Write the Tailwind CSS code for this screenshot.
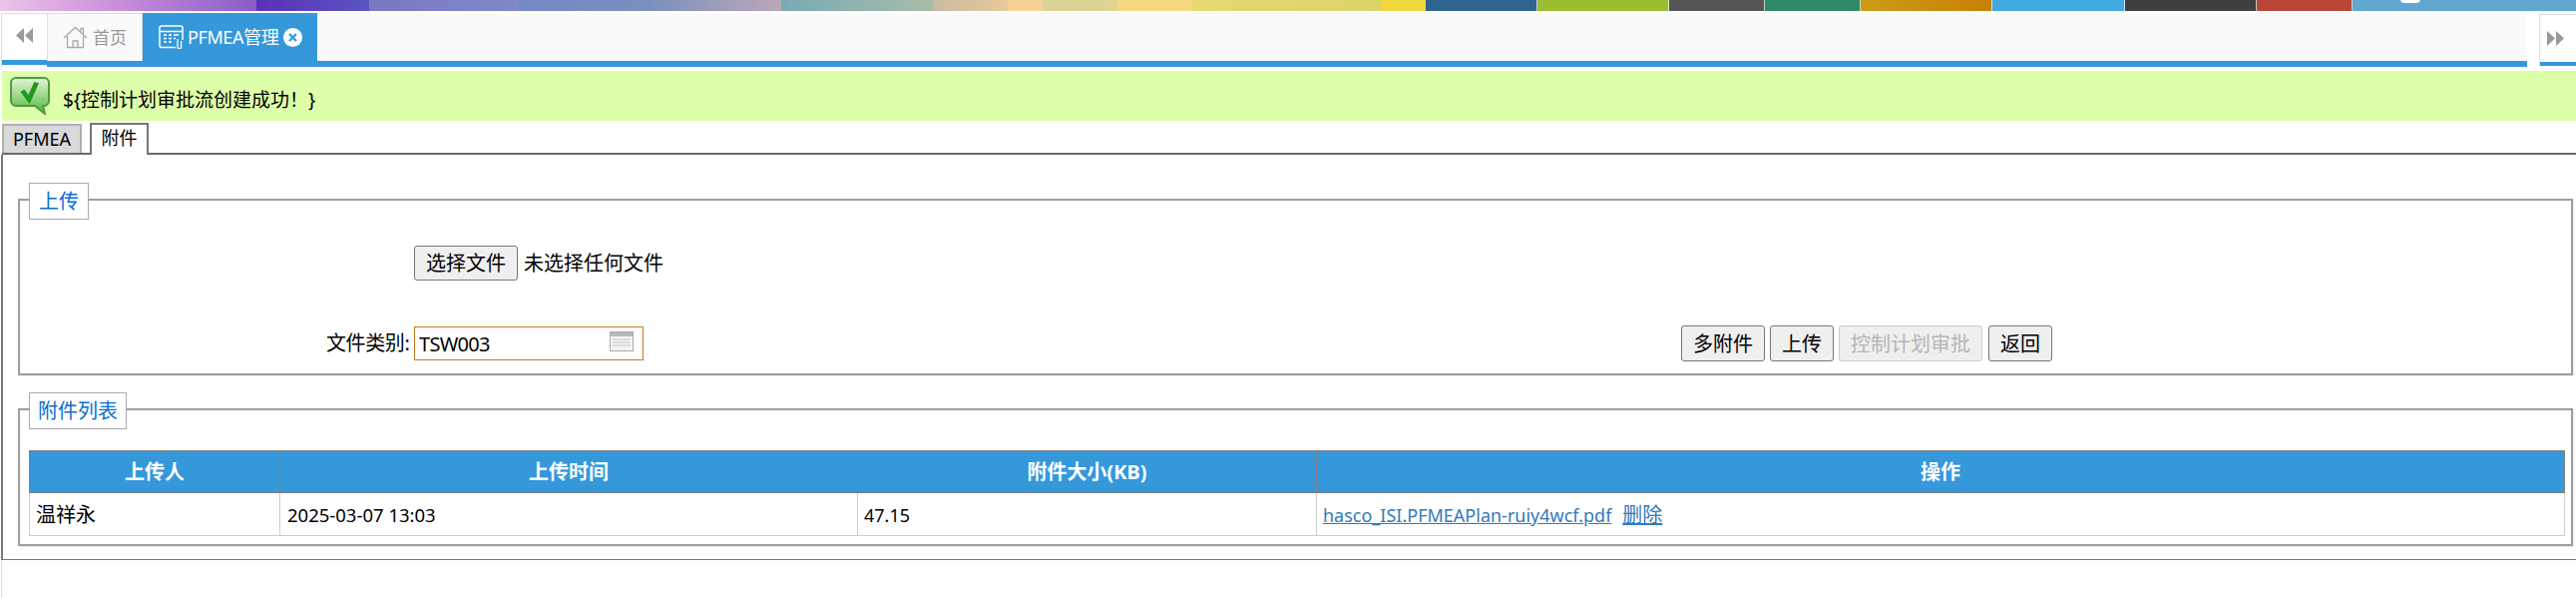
<!DOCTYPE html>
<html lang="zh-CN">
<head>
<meta charset="UTF-8">
<script src="https://cdn.jsdelivr.net/npm/@tailwindcss/browser@4"></script>
<title>PFMEA管理</title>
</head>
<body class="bg-white overflow-hidden font-['Noto_Sans','Noto_Sans_CJK_SC',sans-serif] text-black">
<div class="w-[2582px] h-[599px] flex flex-col overflow-hidden">

  <!-- colour strip -->
  <div class="flex h-[11px] shrink-0 relative">
    <div class="w-[257px] bg-linear-to-r from-[#ecc4e8] via-[#c58ad8] to-[#8a5cc8]"></div>
    <div class="w-[113px] bg-linear-to-r from-[#5830b8] to-[#5a54c2]"></div>
    <div class="w-[150px] bg-linear-to-r from-[#7a78c4] to-[#8088c8]"></div>
    <div class="w-[263px] bg-linear-to-r from-[#7488c8] via-[#7a90bc] to-[#bba8b8]"></div>
    <div class="w-[152px] bg-linear-to-r from-[#78aab4] to-[#a8bca8]"></div>
    <div class="w-[75px] bg-linear-to-r from-[#c8bca0] to-[#e8c898]"></div>
    <div class="w-[35px] bg-[#f8d098]"></div>
    <div class="w-[75px] bg-linear-to-r from-[#d8d498] to-[#e0d490]"></div>
    <div class="w-[75px] bg-[#f6d880]"></div>
    <div class="w-[190px] bg-linear-to-r from-[#e8d870] to-[#dcd468]"></div>
    <div class="w-[44px] bg-[#f2d840]"></div>
    <div class="w-[112px] bg-[#2e658e] border-r border-white/70"></div>
    <div class="w-[132px] bg-[#9bbd30] border-r border-white/70"></div>
    <div class="w-[96px] bg-[#555555] border-r border-white/70"></div>
    <div class="w-[96px] bg-[#2d8a64] border-r border-white/70"></div>
    <div class="w-[132px] bg-linear-to-r from-[#cc9c18] to-[#c88000] border-r border-white/70"></div>
    <div class="w-[133px] bg-[#42a8e2] border-r border-white/70"></div>
    <div class="w-[132px] bg-[#3e3e3e] border-r border-white/70"></div>
    <div class="w-[96px] bg-[#b84535] border-r border-white/70"></div>
    <div class="flex-1 bg-[#62a6d2]"></div>
    <div class="absolute left-[2406px] top-[-5px] w-[20px] h-[8px] rounded-full bg-white"></div>
  </div>

  <!-- tab bar -->
  <div class="flex h-[56px] shrink-0 mt-[2px] border-l border-[#dddddd] ml-px">
    <div class="w-[45px] h-[52px] bg-white border-t border-[#dddddd] flex flex-col shrink-0">
      <div class="flex-1 flex items-center justify-center pb-[3px]">
        <svg width="17" height="15" viewBox="0 0 17 15"><path d="M8 0v15L0 7.500zM17 0v15L9 7.500z" fill="#9a9a9a"/></svg>
      </div>
      <div class="h-[5px] bg-[#3498db]"></div>
    </div>
    <div class="flex-1 flex flex-col">
      <div class="flex h-[48px] bg-[#fafafa]">
        <div class="w-[96px] border-t border-x border-[#dddddd] flex items-center pl-[15px] gap-[5px] text-[#999999] text-[17px]">
          <svg width="25" height="24" viewBox="0 0 25 24" fill="none" stroke="#aaaaaa" stroke-width="1.300"><path d="M1 12 12.500 1.500 24 12M4.500 10v11.500h16V10M10 21.500V15h5v6.500M18 6V2.500h2.500V8"/></svg>
          <span>首页</span>
        </div>
        <div class="w-[175px] bg-[#3498db] text-white flex items-center pl-[16px] gap-[4px] text-[18px]">
          <svg width="25" height="24" viewBox="0 0 25 24" fill="none" stroke="white" stroke-width="1.500"><path d="M17 22.500H3a2 2 0 0 1-2-2V3a2 2 0 0 1 2-2h19a2 2 0 0 1 2 2v12"/><path d="M1 6.500h23M5 10h3M10 10h3M15 10h5M5 13.500h3M10 13.500h3M15 13.500h2M5 17h3M10 17h3"/><path d="M19 14v8a1.800 1.800 0 0 0 3.600 0v-6" stroke-width="1.300"/></svg>
          <span class="tracking-[-0.4px] whitespace-nowrap">PFMEA管理</span>
          <span class="w-[19px] h-[19px] rounded-full bg-white flex items-center justify-center ml-[1px] shrink-0">
            <svg width="9" height="9" viewBox="0 0 9 9"><path d="M1 1l7 7M8 1L1 8" stroke="#3498db" stroke-width="2.200"/></svg>
          </span>
        </div>
      </div>
      <div class="h-[6px] bg-[#3498db]"></div>
    </div>
    <div class="w-[12px] shrink-0"></div>
    <div class="w-[37px] h-[52px] mt-px bg-white border-l border-t border-[#dddddd] flex flex-col shrink-0">
      <div class="flex-1 flex items-center pl-[7px]">
        <svg width="17" height="15" viewBox="0 0 17 15"><path d="M0 0v15l8-7.500zM9 0v15l8-7.500z" fill="#9a9a9a"/></svg>
      </div>
      <div class="h-[4px] bg-[#3498db]"></div>
    </div>
  </div>

  <!-- message -->
  <div class="h-[50px] mt-[2px] ml-[2px] bg-[#ddffaa] flex shrink-0 pl-[8px] gap-[13px]">
    <svg class="mt-[6px]" width="40" height="38" viewBox="0 0 40 38">
      <defs><linearGradient id="msgGreen" x1="0" y1="0" x2="0" y2="1"><stop offset="0" stop-color="#e4f5da"/><stop offset="1" stop-color="#55b83c"/></linearGradient></defs>
      <path d="M6 1h28a5 5 0 0 1 5 5v18a5 5 0 0 1-5 5h-1l2 8-10-8H6a5 5 0 0 1-5-5V6a5 5 0 0 1 5-5z" fill="url(#msgGreen)" stroke="#4f9a40" stroke-width="2"/>
      <path d="M11 15l3.500-2 4 6 6-13.500 4 1-9 20z" fill="#1d9a1d" stroke="#157a15" stroke-width=".6"/>
    </svg>
    <span class="text-[19px] mt-[17px] leading-[24px] whitespace-nowrap">${控制计划审批流创建成功！}</span>
  </div>

  <!-- sub tabs -->
  <div class="flex h-[32px] mt-[2px] ml-[2px] shrink-0 border-b-2 border-[#6a6a6a] text-[18px] leading-[27px]">
    <div class="w-[80px] h-[29px] mt-px bg-[#d9d9d9] border-2 border-b-0 border-[#b0b0b0] text-center">PFMEA</div>
    <div class="w-[59px] h-[32px] ml-[8px] bg-white border-2 border-b-0 border-[#777777] text-center relative z-10">附件</div>
  </div>

  <!-- panel -->
  <div class="h-[406px] ml-px border-l-2 border-b border-[#777777] shrink-0 pl-[15px] pr-[3px] relative">

    <!-- upload fieldset -->
    <div class="relative mt-[44px] h-[177px] border-2 border-[#9e9e9e] shadow-[1px_1px_0_#eeeeee] flex flex-col">
      <div class="absolute left-[9px] top-[-18px] w-[60px] h-[37px] bg-white border border-[#aaaaaa] text-[#0a6ed0] text-[20px] flex items-center justify-center">上传</div>
      <div class="flex items-center mt-[45px] h-[35px] pl-[395px] text-[20px]">
        <button class="w-[104px] h-[35px] pt-px bg-[#efefef] border border-[#767676] rounded-[3px] leading-none">选择文件</button>
        <span class="ml-[6px] pt-px">未选择任何文件</span>
      </div>
      <div class="flex mt-[46px] pl-[307px] items-start text-[20px]">
        <span class="w-[88px] h-[33px] leading-[34px] whitespace-nowrap tracking-[-0.4px]">文件类别:</span>
        <div class="w-[230px] h-[34px] pt-px border border-[#c87820] flex items-center pl-[4px] pr-[9px] justify-between tracking-[-0.7px]">
          <span>TSW003</span>
          <svg class="mb-[5px]" width="24" height="20" viewBox="0 0 24 20"><rect x=".5" y=".5" width="23" height="19" fill="#f4f4f4" stroke="#aaaaaa"/><rect x="1" y="1" width="22" height="4" fill="#b8b8b8"/><path d="M3 8h18M3 11h18M3 14h18" stroke="#c4c4c4"/></svg>
        </div>
        <div class="flex gap-[5px] ml-[1040px] -mt-px text-[20px]">
          <button class="w-[84px] h-[36px] pt-px bg-[#efefef] border border-[#767676] rounded-[3px] leading-none">多附件</button>
          <button class="w-[64px] h-[36px] pt-px bg-[#efefef] border border-[#767676] rounded-[3px] leading-none">上传</button>
          <button class="w-[144px] h-[36px] pt-px bg-[#efefef] border border-[#cccccc] rounded-[3px] text-[#b5b5b5] leading-none" disabled>控制计划审批</button>
          <button class="w-[64px] h-[36px] ml-[1px] pt-px bg-[#efefef] border border-[#767676] rounded-[3px] leading-none">返回</button>
        </div>
      </div>
    </div>

    <!-- attachment list fieldset -->
    <div class="relative mt-[33px] h-[138px] border-2 border-[#9e9e9e] shadow-[1px_1px_0_#eeeeee] pt-[40px] pl-[9px] pr-[6px]">
      <div class="absolute left-[9px] top-[-18px] w-[98px] h-[37px] bg-white border border-[#aaaaaa] text-[#0a6ed0] text-[20px] flex items-center justify-center">附件列表</div>
      <table class="w-[2542px] table-fixed border-collapse text-[18px]">
        <colgroup>
          <col class="w-[251px]"><col class="w-[579px]"><col class="w-[460px]"><col>
        </colgroup>
        <thead>
          <tr class="h-[42px] bg-[#3498db] text-white text-[20px] font-bold">
            <th class="border border-[#808080] font-bold">上传人</th>
            <th class="border border-[#808080] font-bold">上传时间</th>
            <th class="border border-[#808080] font-bold">附件大小(KB)</th>
            <th class="border border-[#808080] font-bold">操作</th>
          </tr>
        </thead>
        <tbody>
          <tr class="h-[43px]">
            <td class="border border-[#cccccc] pl-[6px] pt-[2px] text-[20px]">温祥永</td>
            <td class="border border-[#cccccc] pl-[7px] pt-[2px] text-[18.500px]">2025-03-07 13:03</td>
            <td class="border border-[#cccccc] pl-[6px] pt-[2px]">47.15</td>
            <td class="border border-[#cccccc] pl-[6px] pt-[2px] text-[#337ab7]"><a class="underline" href="#">hasco_ISI.PFMEAPlan-ruiy4wcf.pdf</a><a class="underline ml-[11px] text-[20px]" href="#">删除</a></td>
          </tr>
        </tbody>
      </table>
    </div>
  </div>
  <div class="flex-1 ml-px border-l border-[#dddddd]"></div>
</div>
</body>
</html>
